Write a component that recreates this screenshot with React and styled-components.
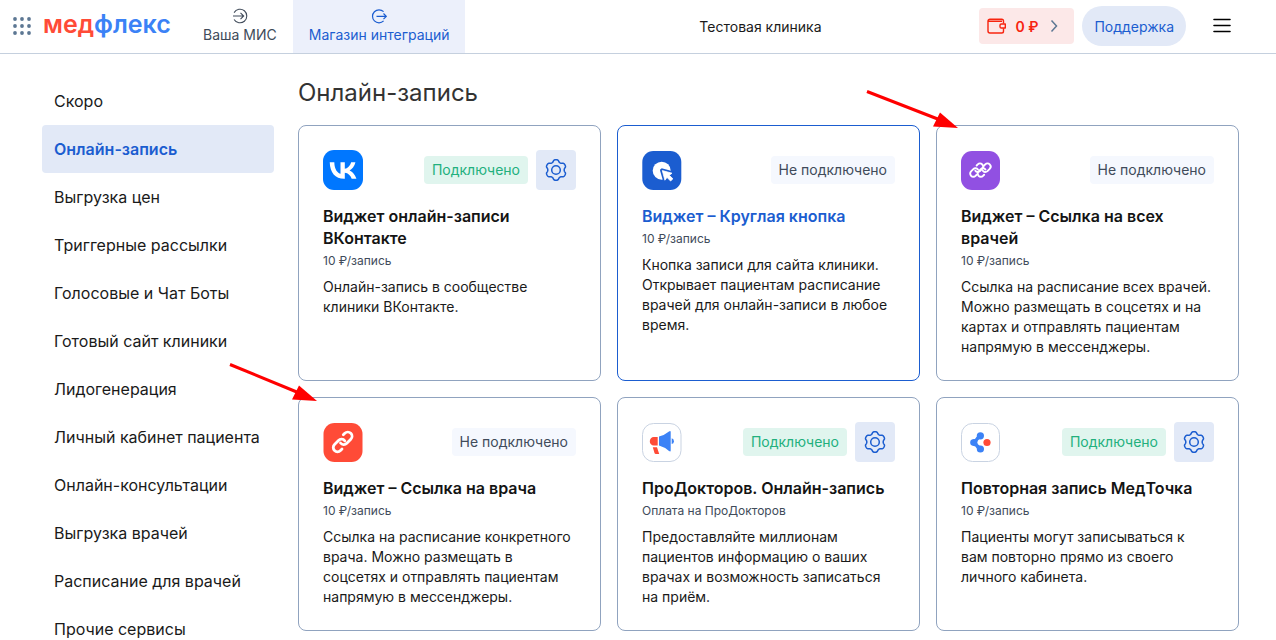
import React from "react";
import styled, { createGlobalStyle, css } from "styled-components";

const GlobalStyle = createGlobalStyle`
  *, *::before, *::after { box-sizing: border-box; }
  body {
    margin: 0;
    background: #fff;
    color: #1a1a1a;
    font-family: Inter, "Liberation Sans", sans-serif;
    font-size: 14px;
  }
  button { font: inherit; border: 0; cursor: pointer; }
  a { color: inherit; text-decoration: none; }
`;

const Page = styled.div`
  position: relative;
`;

const Header = styled.header`
  display: flex;
  align-items: center;
  height: 54px;
  padding: 0 34px 1px 12px;
  border-bottom: 1px solid #c5d0de;
`;

const IconButton = styled.button`
  display: flex;
  align-items: center;
  justify-content: center;
  flex: none;
  width: ${(p) => p.$size}px;
  height: ${(p) => p.$size}px;
  padding: 0;
  border-radius: 4px;
  background: ${(p) => (p.$filled ? "#e2e9f7" : "transparent")};
  color: ${(p) => (p.$filled ? "#1b5dd0" : "#000")};
`;

const Logo = styled.a`
  width: 128px;
  margin: 0 16px 4px 11px;
  color: #3b82f6;
  font-size: 25px;
  line-height: 32px;
  font-weight: 600;
`;

const LogoAccent = styled.span`
  color: #ff4b37;
`;

const Tabs = styled.nav`
  display: flex;
  align-self: stretch;
  margin-bottom: -1px;
`;

const Tab = styled.a`
  display: flex;
  flex-direction: column;
  align-items: center;
  gap: 1px;
  padding: 8px 16px 0;
  line-height: 20px;
  white-space: nowrap;
  color: ${(p) => (p.$active ? "#1b5dd0" : "#404b5a")};
  background: ${(p) => (p.$active ? "#ecf0fb" : "transparent")};
`;

const Clinic = styled.div`
  flex: 1;
  padding-left: 76px;
  text-align: center;
`;

const Balance = styled.button`
  display: flex;
  align-items: center;
  gap: 8px;
  height: 36px;
  margin-right: 8px;
  padding: 0 12px 0 8px;
  border-radius: 4px;
  background: #fce8e8;
  color: #f7240f;
  font-weight: 600;
`;

const Support = styled.button`
  height: 40px;
  margin-right: 16px;
  padding: 0 12px;
  border-radius: 20px;
  background: #e2e9f7;
  color: #1b5dd0;
`;

const Layout = styled.div`
  display: flex;
  align-items: flex-start;
  gap: 24px;
  padding: 23px 37px 0 42px;
`;

const Sidebar = styled.nav`
  flex: none;
  width: 232px;
`;

const SideLink = styled.a`
  display: block;
  padding: 0 12px;
  border-radius: 4px;
  font-size: 16px;
  line-height: 48px;
  white-space: nowrap;
  ${(p) =>
    p.$active &&
    css`
      background: #e2e9f7;
      color: #1b5dd0;
      font-weight: 600;
    `}
`;

const Main = styled.main`
  flex: 1;
  min-width: 0;
`;

const PageTitle = styled.h1`
  margin: 0 0 16px;
  color: #333;
  font-size: 24px;
  line-height: 32px;
  font-weight: 400;
`;

const Grid = styled.div`
  display: grid;
  grid-template-columns: repeat(3, minmax(0, 1fr));
  gap: 16px;
`;

const Card = styled.article`
  padding: 24px 24px 23px;
  border: 1px solid ${(p) => (p.$active ? "#1b5dd0" : "#90a3bf")};
  border-radius: 8px;
`;

const CardHead = styled.div`
  display: flex;
  align-items: center;
  gap: 8px;
  margin-bottom: 15px;
`;

const AppIcon = styled.svg`
  flex: none;
  margin-right: auto;
`;

const Status = styled.span`
  padding: 0 8px;
  border-radius: 4px;
  line-height: 28px;
  white-space: nowrap;
  color: ${(p) => (p.$on ? "#22b07d" : "#404b5a")};
  background: ${(p) => (p.$on ? "#e0f5ee" : "#f5f8fe")};
`;

const CardTitle = styled.h2`
  margin: 0 0 4px;
  font-size: 16px;
  line-height: 22px;
  font-weight: 600;
  color: ${(p) => (p.$active ? "#1b5dd0" : "#141414")};
`;

const Price = styled.p`
  margin: 0 0 8px;
  color: #404b5a;
  font-size: 12px;
  line-height: 16px;
`;

const Description = styled.p`
  margin: 0;
  line-height: 20px;
`;

const Pointer = styled.svg`
  position: absolute;
  left: ${(p) => p.$x}px;
  top: ${(p) => p.$y}px;
  pointer-events: none;
`;

const LINK_A = "M9.2 11.8a4.2 4.2 0 0 0 6.3.5l3-3a4.2 4.2 0 0 0-6-6L11 4.8";
const LINK_B = "M12.8 10.2a4.2 4.2 0 0 0-6.3-.5l-3 3a4.2 4.2 0 0 0 6 6L11 17.2";

const icons = {
  vk: (
    <>
      <rect width="40" height="40" rx="11" fill="#07f" />
      <path
        transform="scale(.8333)"
        fill="#fff"
        d="M25.54 34.58C14.6 34.58 8.36 27.08 8.1 14.6h5.48c.18 9.16 4.22 13.04 7.42 13.84V14.6h5.16v7.9c3.16-.34 6.48-3.94 7.6-7.9h5.16c-.86 4.88-4.46 8.48-7.02 9.96 2.56 1.2 6.66 4.34 8.22 10.02h-5.68c-1.22-3.8-4.26-6.74-8.28-7.14v7.14h-.62Z"
      />
    </>
  ),
  round: (
    <>
      <rect x=".3" y="1" width="39" height="39" rx="11" fill="#1b5dd0" />
      <circle cx="19.7" cy="20.7" r="9" fill="#fff" />
      <path
        d="M20 20.300 30.200 23.200 27.300 25.300 31 28.800 28.600 31 25 27.400 23 30.400Z"
        fill="#fff"
        stroke="#1b5dd0"
        strokeWidth="4"
        strokeLinejoin="round"
      />
      <path
        d="M20.300 20.600 30 23.200 27.300 25.300 30.900 28.800 28.600 31 25 27.400 22.900 30.200Z"
        fill="#fff"
        stroke="#fff"
        strokeWidth=".8"
        strokeLinejoin="round"
      />
    </>
  ),
  links: (
    <>
      <rect y="1" width="39" height="39" rx="11" fill="#9150e2" />
      <g fill="none" stroke="#fff" strokeWidth="2.6" strokeLinecap="round">
        <g transform="translate(7.5 12) scale(.74)">
          <path d={LINK_A} />
          <path d={LINK_B} />
        </g>
        <g transform="translate(15 12) scale(.74)">
          <path d={LINK_A} />
          <path d={LINK_B} />
        </g>
      </g>
    </>
  ),
  link: (
    <>
      <rect x=".5" y="1" width="39" height="39" rx="11" fill="#ff4b37" />
      <g
        transform="translate(8.3 9)"
        fill="none"
        stroke="#fff"
        strokeWidth="2.8"
        strokeLinecap="round"
      >
        <path d="M9.2 12a4.2 4.2 0 0 0 6.3.3l4-4a4.2 4.2 0 0 0-6-6L12 3.8" />
        <path d="M13.500 9.8a4.2 4.2 0 0 0-6.3-.3l-4 4a4.2 4.2 0 0 0 6 6l1.5-1.5" />
      </g>
    </>
  ),
  megaphone: (
    <>
      <rect x=".5" y="1.500" width="38.500" height="38" rx="11" fill="#fff" stroke="#c9d3e2" />
      <path d="M17 14.6Q22.500 13 27 9.400 28.700 8.400 28.700 10V28.500Q28.700 30 27 29 22.500 25 17 23.500Z" fill="#3b82f6" />
      <path d="M29.700 16.300a3 3 0 0 1 0 5.800Z" fill="#3b82f6" />
      <path d="M15.700 15v8.400H12a4 4 0 0 1-4.200-4.200 4 4 0 0 1 4.200-4.200Z" fill="#ff4b37" />
      <path d="M10.800 25.200h4.200l2.200 6.800h-3.400q-1 0-1.300-1Z" fill="#ff4b37" />
    </>
  ),
  repeat: (
    <>
      <rect x=".5" y="1.5" width="38" height="38" rx="11" fill="#fff" stroke="#c9d3e2" />
      <path d="M15.800 14.500Q15 17 11.500 17.600V23.400Q15 24 15.800 26.500L19 24Q13.500 20.500 19 16.500Z" fill="#3b82f6" />
      <circle cx="12.500" cy="20.500" r="3.300" fill="#3b82f6" />
      <circle cx="19.400" cy="13.800" r="3.600" fill="#3b82f6" />
      <circle cx="19.400" cy="27" r="3.600" fill="#3b82f6" />
      <circle cx="26" cy="20.500" r="3.600" fill="#ff4b37" />
    </>
  ),
};

// Outline of a six-lobed gear centred on (12, 12).
const GEAR_OUTLINE = Array.from({ length: 120 }, (_, i) => {
  const angle = (i / 120) * Math.PI * 2;
  const radius = 9.2 + 1.15 * Math.tanh(-1.6 * Math.cos(6 * angle) + 0.3);
  const x = 12 + radius * Math.cos(angle);
  const y = 12 + radius * Math.sin(angle);
  return `${x.toFixed(2)},${y.toFixed(2)}`;
}).join(" ");

const GearIcon = () => (
  <svg width="24" height="24" viewBox="0 0 24 24" fill="none" stroke="currentColor" strokeWidth="1.5" strokeLinejoin="round" aria-hidden="true">
    <polygon points={GEAR_OUTLINE} />
    <circle cx="12" cy="12" r="4.3" />
  </svg>
);

const DotsIcon = () => (
  <svg width="20" height="20" viewBox="0 0 20 20" fill="#5c7793" aria-hidden="true">
    {[3, 10, 17].map((y) =>
      [3, 10, 17].map((x) => <circle key={`${x}-${y}`} cx={x} cy={y} r="1.9" />)
    )}
  </svg>
);

const EnterIcon = () => (
  <svg width="16" height="16" viewBox="0 0 16 16" fill="none" stroke="currentColor" strokeWidth="1.1" aria-hidden="true">
    <path d="M2.1 4.6a6.800 6.800 0 1 1 0 6.8M1 8h10.500M8.500 4.800 11.700 8l-3.200 3.200" />
  </svg>
);

const ExitIcon = () => (
  <svg width="16" height="16" viewBox="0 0 16 16" fill="none" stroke="currentColor" strokeWidth="1.2" aria-hidden="true">
    <path d="M12.600 3.700a6.500 6.500 0 1 0 0 9.200M5.500 8.300h9.700M12.500 5.500l2.800 2.800-2.800 2.800" />
  </svg>
);

const WalletIcon = () => (
  <svg width="20" height="18" viewBox="0 0 20 18" fill="none" stroke="currentColor" strokeWidth="1.4" strokeLinejoin="round" aria-hidden="true">
    <path d="M16.500 6.500V4a1.800 1.800 0 0 0-1.800-1.800H3A2 2 0 0 0 1 4.200V14a2 2 0 0 0 2 2h11.700a1.800 1.800 0 0 0 1.800-1.800v-3M1.200 4.300H15" />
    <path d="M14.300 7h4v4h-4a1.300 1.300 0 0 1-1.300-1.300V8.300A1.300 1.300 0 0 1 14.300 7Z" />
  </svg>
);

const MenuIcon = () => (
  <svg width="20" height="20" viewBox="0 0 20 20" fill="none" stroke="currentColor" strokeWidth="1.6" strokeLinecap="round" aria-hidden="true">
    <path d="M2 3.500h16M2 9.500h16M2 15.500h16" />
  </svg>
);

const ChevronIcon = () => (
  <svg width="16" height="16" viewBox="0 0 16 16" fill="none" stroke="#5c7793" strokeWidth="1.5" aria-hidden="true">
    <path d="m5.500 2.500 5 5.500-5 5.500" />
  </svg>
);

const Arrow = ({ x, y, length }) => (
  <Pointer $x={x} $y={y} width="96" height="42" viewBox="0 0 96 42" aria-hidden="true">
    <path d={`M1 1.5 ${length - 19} 29.5`} stroke="#f00" strokeWidth="3" />
    <path d={`M${length - 18} 22.500 ${length} 38l-25-1.500Z`} fill="#f00" />
  </Pointer>
);

const sections = [
  "Скоро",
  "Онлайн-запись",
  "Выгрузка цен",
  "Триггерные рассылки",
  "Голосовые и Чат Боты",
  "Готовый сайт клиники",
  "Лидогенерация",
  "Личный кабинет пациента",
  "Онлайн-консультации",
  "Выгрузка врачей",
  "Расписание для врачей",
  "Прочие сервисы",
];

const cards = [
  {
    icon: "vk",
    on: true,
    title: "Виджет онлайн-записи ВКонтакте",
    price: "10 ₽/запись",
    text: "Онлайн-запись в сообществе клиники ВКонтакте.",
  },
  {
    icon: "round",
    active: true,
    title: "Виджет – Круглая кнопка",
    price: "10 ₽/запись",
    text: "Кнопка записи для сайта клиники. Открывает пациентам расписание врачей для онлайн-записи в любое время.",
  },
  {
    icon: "links",
    title: "Виджет – Ссылка на всех врачей",
    price: "10 ₽/запись",
    text: "Ссылка на расписание всех врачей. Можно размещать в соцсетях и на картах и отправлять пациентам напрямую в мессенджеры.",
  },
  {
    icon: "link",
    title: "Виджет – Ссылка на врача",
    price: "10 ₽/запись",
    text: "Ссылка на расписание конкретного врача. Можно размещать в соцсетях и отправлять пациентам напрямую в мессенджеры.",
  },
  {
    icon: "megaphone",
    on: true,
    title: "ПроДокторов. Онлайн-запись",
    price: "Оплата на ПроДокторов",
    text: "Предоставляйте миллионам пациентов информацию о ваших врачах и возможность записаться на приём.",
  },
  {
    icon: "repeat",
    on: true,
    title: "Повторная запись МедТочка",
    price: "10 ₽/запись",
    text: "Пациенты могут записываться к вам повторно прямо из своего личного кабинета.",
  },
];

export default function App() {
  return (
    <Page>
      <GlobalStyle />
      <Header>
        <IconButton $size={20} aria-label="Сервисы">
          <DotsIcon />
        </IconButton>
        <Logo href="#">
          <LogoAccent>мед</LogoAccent>флекс
        </Logo>
        <Tabs>
          <Tab href="#">
            <EnterIcon />
            Ваша МИС
          </Tab>
          <Tab href="#" $active>
            <ExitIcon />
            Магазин интеграций
          </Tab>
        </Tabs>
        <Clinic>Тестовая клиника</Clinic>
        <Balance>
          <WalletIcon />
          0 ₽
          <ChevronIcon />
        </Balance>
        <Support>Поддержка</Support>
        <IconButton $size={40} aria-label="Меню">
          <MenuIcon />
        </IconButton>
      </Header>
      <Layout>
        <Sidebar>
          {sections.map((name) => (
            <SideLink key={name} href="#" $active={name === "Онлайн-запись"}>
              {name}
            </SideLink>
          ))}
        </Sidebar>
        <Main>
          <PageTitle>Онлайн-запись</PageTitle>
          <Grid>
            {cards.map((c) => (
              <Card key={c.title} $active={c.active}>
                <CardHead>
                  <AppIcon width="40" height="40" viewBox="0 0 40 40" aria-hidden="true">
                    {icons[c.icon]}
                  </AppIcon>
                  <Status $on={c.on}>{c.on ? "Подключено" : "Не подключено"}</Status>
                  {c.on && (
                    <IconButton $size={40} $filled aria-label="Настройки">
                      <GearIcon />
                    </IconButton>
                  )}
                </CardHead>
                <CardTitle $active={c.active}>{c.title}</CardTitle>
                <Price>{c.price}</Price>
                <Description>{c.text}</Description>
              </Card>
            ))}
          </Grid>
        </Main>
      </Layout>
      <Arrow x={866} y={90} length={92} />
      <Arrow x={229} y={363} length={88} />
    </Page>
  );
}
